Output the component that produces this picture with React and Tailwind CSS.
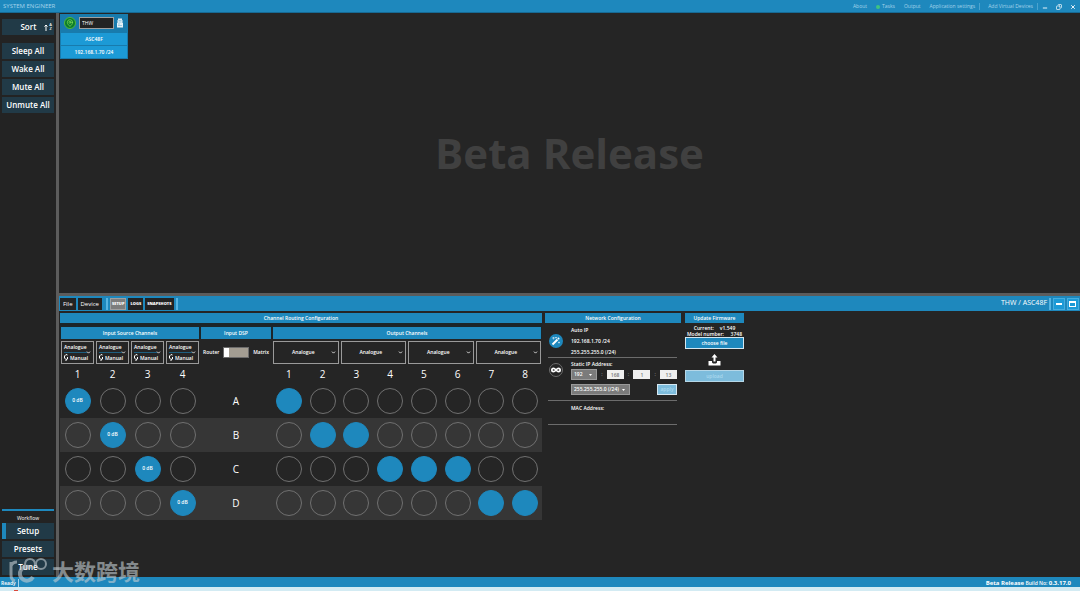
import React, { useState } from 'react';
import {
  ChevronDown,
  Copy,
  Infinity as InfinityIcon,
  MapPin,
  Minus,
  X
} from 'lucide-react';

const inputSources = [1, 2, 3, 4];
const outputPairs = ['1-2', '3-4', '5-6', '7-8'];
const outputs = [1, 2, 3, 4, 5, 6, 7, 8];

const dspRows = [
  { id: 'A', inputs: [1], outputs: [1] },
  { id: 'B', inputs: [2], outputs: [2, 3] },
  { id: 'C', inputs: [3], outputs: [4, 5, 6] },
  { id: 'D', inputs: [4], outputs: [7, 8] }
];

const SideButton = ({ active, children }) => (
  <button
    className={`flex h-4 w-full items-center justify-center border-l-4 bg-[#213a47] pr-1 text-[8px] font-semibold text-white ${
      active ? 'border-[#1e88bd]' : 'border-[#213a47]'
    }`}
  >
    {children}
  </button>
);

const PanelHeader = ({ children, className = 'h-[10px]' }) => (
  <h2 className={`flex items-center justify-center bg-[#1e88bd] pt-px text-[5px] font-semibold ${className}`}>
    {children}
  </h2>
);

const Dot = ({ on, label, name }) => (
  <button
    aria-label={name}
    className={`flex size-[26px] items-center justify-center justify-self-center rounded-full border text-[5px] font-semibold ${
      on ? 'border-[#1e88bd] bg-[#1e88bd]' : 'border-[#707070]'
    }`}
  >
    {on && label}
  </button>
);

const TitleBar = () => (
  <header className="flex h-[13px] shrink-0 items-center justify-between border-b border-[#176a94] bg-[#1e88bd] pl-[3px] pr-1 pt-px text-[#a5d3ea]">
    <h1 className="text-[6px] font-medium">SYSTEM ENGINEER</h1>
    <nav className="flex h-full items-center text-[5px] font-medium">
      <a href="#about" className="mr-[9px]">About</a>
      <a href="#tasks" className="mr-[9px] flex items-center gap-[2px]">
        <span className="size-1 rounded-full bg-[#3fc380]"></span>
        Tasks
      </a>
      <a href="#output" className="mr-[9px]">Output</a>
      <a href="#settings" className="border-r border-[#4ba3cf] pr-1">Application settings</a>
      <a href="#virtual" className="border-r border-[#4ba3cf] pl-2 pr-1">Add Virtual Devices</a>
      <div className="ml-1 flex gap-2 text-[#e3f1f8]">
        <button aria-label="Minimise" className="pt-[2px]"><Minus className="size-[6px]" strokeWidth={4} /></button>
        <button aria-label="Restore"><Copy className="size-[6px] -scale-x-100" strokeWidth={3} /></button>
        <button aria-label="Close"><X className="size-[6px]" strokeWidth={4} /></button>
      </div>
    </nav>
  </header>
);

const Sidebar = () => (
  <aside className="flex w-14 shrink-0 flex-col bg-[#232323] px-[2px]">
    <button className="mt-[6px] flex h-4 w-full items-center justify-end gap-2 bg-[#213a47] pr-[2px] text-[8px] font-semibold">
      Sort
      <span className="flex items-center gap-px">
        <svg viewBox="0 0 8 14" className="h-[7px] w-1" fill="none" stroke="currentColor" strokeWidth="2">
          <path d="M4 14V2M1 5l3-3 3 3" />
        </svg>
        <span className="flex flex-col text-[4px] leading-[4px]">
          <span>A</span>
          <span>Z</span>
        </span>
      </span>
    </button>
    <div className="mt-2 flex flex-col gap-[2px]">
      <SideButton>Sleep All</SideButton>
      <SideButton>Wake All</SideButton>
      <SideButton>Mute All</SideButton>
      <SideButton>Unmute All</SideButton>
    </div>
    <div className="mt-auto border-t-2 border-[#1e88bd] pb-[2px]">
      <h2 className="pb-[2px] pt-1 text-center text-[5px] font-medium leading-[6px]">Workflow</h2>
      <div className="flex flex-col gap-[2px]">
        <SideButton active>Setup</SideButton>
        <SideButton>Presets</SideButton>
        <SideButton>Tune</SideButton>
      </div>
    </div>
  </aside>
);

const DeviceCard = () => (
  <div className="flex w-[68px] flex-col gap-px bg-[#187bad] px-px pb-px text-[5px] font-semibold">
    <div className="flex h-[18px] items-center justify-between pl-[3px] pr-1">
      <span className="flex size-3 items-center justify-center rounded-full border border-[#4fb83a] bg-[#0b7b2c]">
        <MapPin className="size-2 text-[#8be65a]" strokeWidth={2} />
      </span>
      <input
        aria-label="Device name"
        defaultValue="THW"
        className="h-3 w-[35px] border border-[#a0a0a0] bg-[#232323] px-[2px] text-[5px] font-normal"
      />
      <svg viewBox="0 0 12 20" className="h-[10px] w-[6px]">
        <path d="M2 1h8v3h1v6h1v9H0v-9h1V4h1z" fill="#e3f1f8" />
        <path d="M3 5h6M3 8h6M2 12h4M2 15h8" stroke="#4aa3cf" strokeWidth="1" />
      </svg>
    </div>
    <div className="flex h-3 items-center justify-center bg-[#1c9ad6] pt-px">ASC48F</div>
    <div className="flex h-3 items-center justify-center bg-[#1c9ad6] pt-px">192.168.1.70 /24</div>
  </div>
);

const Toolbar = () => (
  <div className="flex h-[15px] shrink-0 items-center justify-between bg-[#1e88bd] px-px">
    <div className="flex h-full items-center gap-[2px]">
      <button className="h-3 bg-[#232323] px-[3px] text-[6px] font-medium leading-3">File</button>
      <button className="h-3 bg-[#232323] px-[3px] text-[6px] font-medium leading-3">Device</button>
      <span className="ml-[2px] h-3 w-[2px] bg-[#56b4e2]"></span>
      <button className="h-3 border border-[#a0a0a0] bg-[#7d7d7d] px-px text-[4px] font-extrabold leading-[10px]">SETUP</button>
      <button className="h-3 bg-[#232323] px-[2px] text-[4px] font-extrabold leading-3">LOGS</button>
      <button className="h-3 bg-[#232323] px-[2px] text-[4px] font-extrabold leading-3">SNAPSHOTS</button>
      <span className="h-3 w-[2px] bg-[#56b4e2]"></span>
    </div>
    <div className="flex h-full items-center gap-[2px] text-[7px]">
      THW / ASC48F
      <span className="h-3 w-[2px] bg-[#56b4e2]"></span>
      <button aria-label="Collapse" className="flex size-3 items-center justify-center border border-[#45addf] bg-[#1c9ad6]">
        <svg viewBox="0 0 8 8" className="size-2" fill="currentColor">
          <path d="M1 3h6v2H1z" />
        </svg>
      </button>
      <button aria-label="Maximise" className="flex size-3 items-center justify-center border border-[#45addf] bg-[#1c9ad6]">
        <svg viewBox="0 0 8 8" className="size-2" fill="currentColor" fillRule="evenodd">
          <path d="M0 1h7v6H0zM1 3v3h5V3z" />
        </svg>
      </button>
    </div>
  </div>
);

const RoutingPanel = () => {
  const [matrix, setMatrix] = useState(false);

  return (
    <section className="w-[482px] shrink-0">
      <PanelHeader>Channel Routing Configuration</PanelHeader>
      <div className="grid grid-cols-[140px_72px_270px] bg-[#1c2529] pt-1">
        <PanelHeader className="mx-px h-3">Input Source Channels</PanelHeader>
        <PanelHeader className="mx-px h-3">Input DSP</PanelHeader>
        <PanelHeader className="mx-px h-3">Output Channels</PanelHeader>
      </div>
      <div className="grid grid-cols-[140px_72px_270px] pt-[2px]">
        <div className="grid grid-cols-4">
          {inputSources.map((n) => (
            <button
              key={n}
              aria-label={`Input ${n} source`}
              className="mx-px flex h-[23px] items-center justify-between border border-[#9a9a9a] px-[2px] text-[5px] font-semibold"
            >
              <span className="flex flex-col items-start leading-[10px]">
                <span className="border-b border-[#1e5f80] leading-[9px]">Analogue</span>
                <span className="flex items-center gap-[2px]">
                  <svg viewBox="0 0 8 14" className="h-[7px] w-1" fill="none" stroke="currentColor" strokeWidth="2">
                    <path d="M7 2L4 1 1 4v4l3 3M7 6v4l-3 1v3" />
                  </svg>
                  Manual
                </span>
              </span>
              <ChevronDown className="-ml-[2px] size-[5px] shrink-0" strokeWidth={4} />
            </button>
          ))}
        </div>
        <label className="flex items-center justify-between px-[3px] text-[5px] font-semibold">
          Router
          <input
            type="checkbox"
            checked={matrix}
            onChange={() => setMatrix(!matrix)}
            className="peer sr-only"
          />
          <span className="flex h-[11px] w-[26px] border border-[#6c6c6c] bg-[#a39d92] peer-checked:justify-end">
            <span className="w-[5px] bg-white"></span>
          </span>
          Matrix
        </label>
        <div className="grid grid-cols-4">
          {outputPairs.map((pair) => (
            <button
              key={pair}
              aria-label={`Output ${pair} type`}
              className="mx-px flex h-[23px] items-center border border-[#9a9a9a] pl-[2px] pr-[2px] text-[5px] font-semibold"
            >
              <span className="flex-1">Analogue</span>
              <ChevronDown className="size-[5px]" strokeWidth={4} />
            </button>
          ))}
        </div>
      </div>
      <div className="grid h-5 grid-cols-[140px_72px_270px] items-center text-[10px] font-medium">
        <div className="grid grid-cols-4 text-center">
          {inputSources.map((n) => <span key={n}>{n}</span>)}
        </div>
        <span></span>
        <div className="grid grid-cols-8 text-center">
          {outputs.map((n) => <span key={n}>{n}</span>)}
        </div>
      </div>
      {dspRows.map((row) => (
        <div key={row.id} className="grid h-[34px] grid-cols-[140px_72px_270px] items-center even:bg-[#363636]">
          <div className="grid grid-cols-4">
            {inputSources.map((n) => (
              <Dot key={n} name={`Input ${n} to ${row.id}`} on={row.inputs.includes(n)} label="0 dB" />
            ))}
          </div>
          <span className="text-center text-[10px] font-medium">{row.id}</span>
          <div className="grid grid-cols-8">
            {outputs.map((n) => (
              <Dot key={n} name={`${row.id} to output ${n}`} on={row.outputs.includes(n)} />
            ))}
          </div>
        </div>
      ))}
    </section>
  );
};

const DropDown = ({ label, value, className }) => (
  <span className={`flex h-[11px] items-center border border-[#9a9a9a] bg-[#7b7b7b] pr-1 ${className}`}>
    <select aria-label={label} className="min-w-0 flex-1 appearance-none px-[2px] text-[5px]">
      <option>{value}</option>
    </select>
    <svg viewBox="0 0 6 4" className="h-[2px] w-[3px]" fill="currentColor">
      <path d="M0 0h6L3 4z" />
    </svg>
  </span>
);

const NetworkPanel = () => (
  <section className="w-[136px] shrink-0 text-[5px] font-semibold">
    <PanelHeader>Network Configuration</PanelHeader>
    <div className="pl-[3px] pr-1">
      <div className="flex h-[35px] items-center gap-2 border-b border-[#6c6c6c] pl-px pt-[2px]">
        <button aria-label="Use auto IP" className="flex size-[14px] items-center justify-center rounded-full bg-[#1e88bd]">
          <svg viewBox="0 0 20 20" className="size-[10px]" stroke="currentColor">
            <path d="M3 17L13 7" strokeWidth="4" />
            <path d="M14 6l2-2" strokeWidth="4" />
            <path d="M5 2v5M2 4h6M16 11v4M14 13h4M10 2v3M8 3h4" strokeWidth="1" />
          </svg>
        </button>
        <div className="leading-[11px]">
          <p>Auto IP</p>
          <p>192.168.1.70 /24</p>
          <p>255.255.255.0 (/24)</p>
        </div>
      </div>
      <div className="flex h-[43px] gap-2 border-b border-[#6c6c6c] pl-px pt-[2px]">
        <button aria-label="Use static IP" className="mt-[3px] flex size-[14px] shrink-0 items-center justify-center rounded-full border border-[#6c6c6c]">
          <InfinityIcon className="size-[10px]" strokeWidth={4} />
        </button>
        <div className="flex-1">
          <p className="leading-[9px]">Static IP Address:</p>
          <div className="flex items-center justify-between">
            <DropDown label="First octet" value="192" className="w-[26px]" />
            <span className="text-[#8a8a8a]">:</span>
            <input aria-label="Second octet" defaultValue="168" className="h-[9px] w-[17px] bg-[#efefef] text-center text-[5px] text-[#777]" />
            <span className="text-[#8a8a8a]">:</span>
            <input aria-label="Third octet" defaultValue="1" className="h-[9px] w-[17px] bg-[#efefef] text-center text-[5px] text-[#777]" />
            <span className="text-[#8a8a8a]">:</span>
            <input aria-label="Fourth octet" defaultValue="13" className="h-[9px] w-[17px] bg-[#efefef] text-center text-[5px] text-[#777]" />
          </div>
          <div className="mt-1 flex items-center justify-between">
            <DropDown label="Subnet mask" value="255.255.255.0 (/24)" className="w-[59px]" />
            <button className="h-[11px] w-5 border border-[#d5e8f2] bg-[#7dbcdc] leading-[9px] text-[#a9d8ee]">apply</button>
          </div>
        </div>
      </div>
      <div className="h-6 border-b border-[#6c6c6c] pl-[23px] pt-[3px]">
        <p className="leading-[9px]">MAC Address:</p>
      </div>
    </div>
  </section>
);

const FirmwarePanel = () => (
  <section className="flex w-[59px] shrink-0 flex-col text-[5px] font-semibold">
    <PanelHeader>Update Firmware</PanelHeader>
    <dl className="flex justify-center gap-[6px] pt-[2px] leading-[6px]">
      <dt>Current:</dt>
      <dd>v1.549</dd>
    </dl>
    <dl className="flex justify-between px-[2px] leading-[6px]">
      <dt>Model number:</dt>
      <dd>3748</dd>
    </dl>
    <button className="h-3 border border-[#d5e8f2] bg-[#1e88bd] leading-[10px]">choose file</button>
    <svg viewBox="0 0 26 24" className="mx-auto mb-1 mt-[5px] h-3 w-[13px]" fill="currentColor">
      <path d="M13 0l6 7h-4v8h-4V7H7z" />
      <path d="M1 14h7v3l2 2h6l2-2v-3h7v9H1z" />
    </svg>
    <button className="h-3 border border-[#b5d7e8] bg-[#7dbcdc] leading-[10px] text-[#a9d8ee]">upload</button>
  </section>
);

const StatusBar = () => (
  <footer className="shrink-0 bg-[#1e88bd]">
    <div className="flex h-[10px] items-center justify-between pl-px pr-[9px] pt-px text-[5px] font-semibold">
      <span className="border-r border-[#a5d3ea] pr-[2px] leading-[8px]">Ready</span>
      <p className="leading-[8px]">
        <span className="text-[6px] font-bold">Beta Release</span> Build No:{' '}
        <span className="text-[6px] font-bold">0.3.17.0</span>
      </p>
    </div>
    <div className="flex h-1 items-end bg-[#d3ebf3] pl-[14px]">
      <span className="h-px w-1 bg-[#d9483b]"></span>
    </div>
  </footer>
);

const Watermark = () => (
  <div className="pointer-events-none absolute bottom-[7px] left-2 flex items-center gap-1 text-[#c4cdd2] opacity-60">
    <svg viewBox="0 0 40 28" className="h-7 w-10" fill="none" stroke="currentColor">
      <path d="M3 6v13c0 3 1 5 4 6M3 10c1-3 3-4 6-4" strokeWidth="3" />
      <path d="M25 21a7 7 0 1 1-2-9" strokeWidth="4" />
      <path d="M17 9c0-4 2-6 5-6s5 2 5 6" strokeWidth="2" />
      <circle cx="33" cy="8" r="5" strokeWidth="2" />
    </svg>
    <span className="font-['Noto_Sans_CJK_SC',sans-serif] text-[22px] font-bold leading-7">大数跨境</span>
  </div>
);

const App = () => {
  return (
    <div className="relative flex h-screen flex-col overflow-hidden bg-[#252525] font-['Open_Sans','Noto_Sans',sans-serif] text-white">
      <TitleBar />
      <div className="flex min-h-0 flex-1">
        <Sidebar />
        <main className="flex min-w-0 flex-1 flex-col border-l-[3px] border-[#5c5c5c]">
          {/* Device workspace */}
          <div className="flex min-h-0 flex-1 flex-col p-px">
            <div className="flex">
              <DeviceCard />
            </div>
            <p className="mt-16 text-center text-[42px] font-bold leading-[60px] text-[#404040]">
              Beta Release
            </p>
          </div>

          {/* Device detail */}
          <div className="flex h-71 shrink-0 flex-col border-t-[3px] border-[#5c5c5c]">
            <Toolbar />
            <div className="flex gap-[3px] pl-px pt-[2px]">
              <RoutingPanel />
              <NetworkPanel />
              <div className="pl-px">
                <FirmwarePanel />
              </div>
            </div>
          </div>
        </main>
      </div>
      <StatusBar />
      <Watermark />
    </div>
  );
};

export default App;
